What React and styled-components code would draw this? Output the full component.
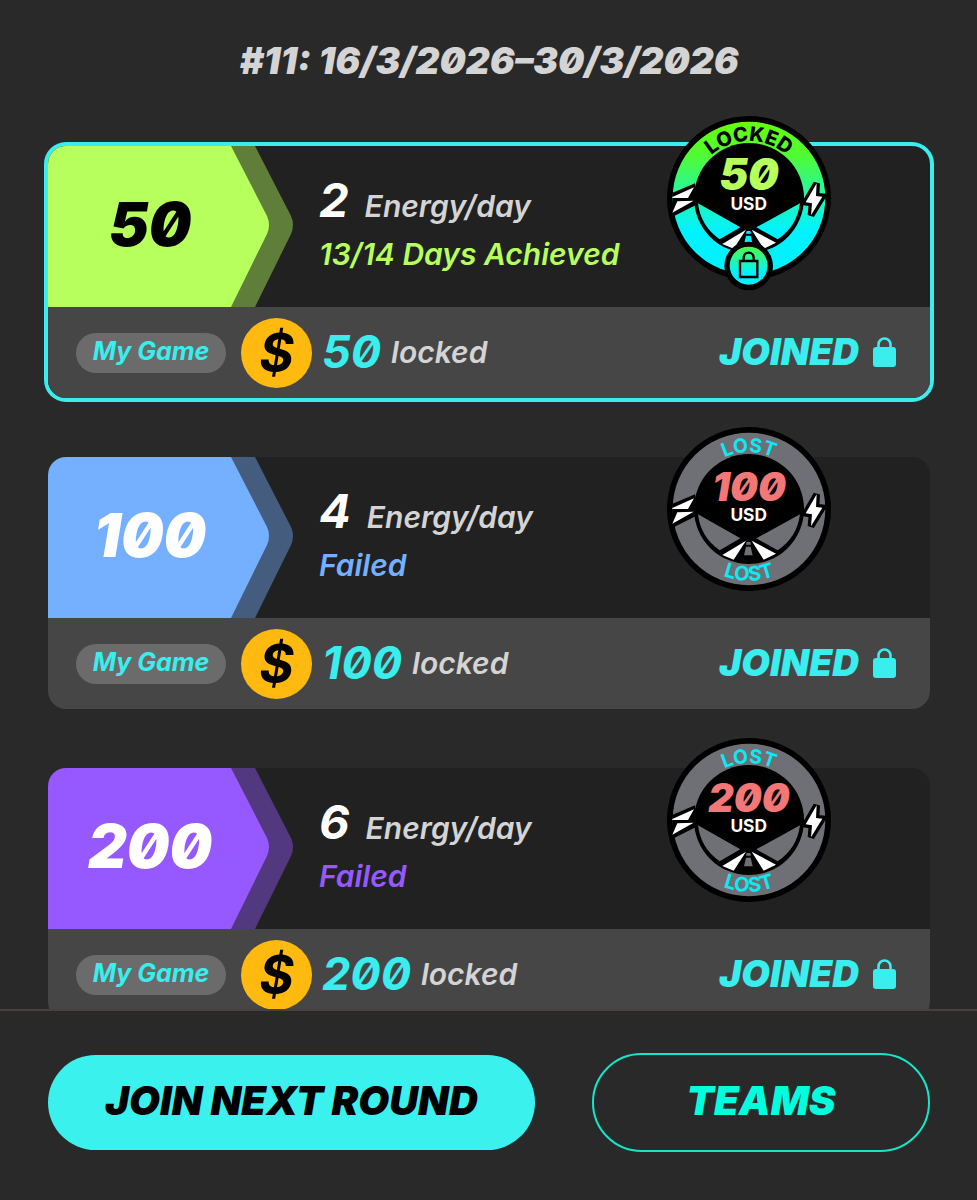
import React from 'react';
import styled, { createGlobalStyle } from 'styled-components';

const GlobalStyle = createGlobalStyle`
  * {
    box-sizing: border-box;
  }

  body {
    margin: 0;
    background: #292929;
    font-family: Inter, 'Liberation Sans', sans-serif;
    font-feature-settings: 'zero' 1;
    font-style: italic;
  }
`;

const Page = styled.div`
  display: flex;
  flex-direction: column;
  height: 100vh;
`;

const Content = styled.main`
  flex: 1;
  min-height: 0;
  padding: 41px 47px 40px 48px;
  overflow-y: auto;
  scrollbar-width: none;
`;

const RoundTitle = styled.h1`
  margin: 0 0 65px;
  color: #d4d4d4;
  font-size: 37px;
  font-weight: 900;
  line-height: 40px;
  text-align: center;
`;

const CardList = styled.div`
  display: flex;
  flex-direction: column;
  gap: 59px;
`;

const GameCard = styled.article`
  position: relative;
  border-radius: 18px;
  background: #212121;
  box-shadow: ${props => (props.$active ? '0 0 0 4px #3beeee' : 'none')};
`;

const CardTop = styled.div`
  display: flex;
  gap: 26px;
  height: 161px;
`;

const StakeTag = styled.div`
  display: grid;
  flex-shrink: 0;
  width: 245px;
  border-top-left-radius: 18px;
  overflow: hidden;

  > * {
    grid-area: 1 / 1;
  }
`;

const StakeAmount = styled.strong`
  padding: 43px 41px 0 0;
  color: ${props => props.$color};
  font-size: 60px;
  font-weight: 900;
  line-height: 70px;
  text-align: center;
`;

const Goal = styled.div`
  padding-top: 26px;
`;

const EnergyRow = styled.p`
  display: flex;
  align-items: baseline;
  gap: 16px;
  margin: 0;
  color: #d4d4d4;
  font-size: 30px;
  font-weight: 600;
  line-height: 56px;
`;

const EnergyCount = styled.strong`
  color: #fff;
  font-size: 47px;
  font-weight: 700;
`;

const GoalStatus = styled.p`
  margin: 2px 0 0;
  color: ${props => props.$color};
  font-size: 30px;
  font-weight: 600;
  line-height: 36px;
`;

const CardBottom = styled.div`
  display: flex;
  align-items: center;
  height: 91px;
  padding: 0 34px 0 28px;
  border-radius: 0 0 18px 18px;
  background: #464646;
`;

const GamePill = styled.span`
  width: 150px;
  height: 40px;
  margin-right: 15px;
  border-radius: 20px;
  background: #6b6b6b;
  color: #3beeee;
  font-size: 25px;
  font-weight: 700;
  line-height: 36px;
  text-align: center;
`;

const Coin = styled.span`
  width: 71px;
  height: 70px;
  margin-right: 10px;
  border-radius: 50%;
  background: #ffb90f;
  color: #000;
  font-size: 53px;
  font-weight: 700;
  line-height: 70px;
  text-align: center;
`;

const LockedText = styled.p`
  display: flex;
  align-items: center;
  gap: 10px;
  margin: 0;
  padding-bottom: 2px;
  color: #d4d4d4;
  font-size: 30px;
  font-weight: 600;
  line-height: 48px;
`;

const LockedAmount = styled.strong`
  color: #3beeee;
  font-size: 45px;
  font-weight: 700;
`;

const JoinedLabel = styled.span`
  display: flex;
  align-items: center;
  gap: 14px;
  margin-left: auto;
  padding-bottom: 2px;
  color: #3beeee;
  font-size: 37px;
  font-weight: 900;
  line-height: 40px;
`;

const BadgeSvg = styled.svg`
  position: absolute;
  top: -30px;
  right: 99px;
  width: 164px;
  font-style: normal;
`;

const Footer = styled.footer`
  display: flex;
  align-items: center;
  gap: 57px;
  padding: 42px 47px 48px 48px;
  border-top: 2px solid #46403e;
`;

const ActionButton = styled.button`
  flex: ${props => (props.$outline ? '0 1 338px' : '1 1 0')};
  height: ${props => (props.$outline ? '99px' : '95px')};
  padding: 0 0 4px;
  border: ${props => (props.$outline ? '2px solid #14e6ca' : 'none')};
  border-radius: 50px;
  background: ${props => (props.$outline ? 'transparent' : '#3af1ee')};
  color: ${props => (props.$outline ? '#00ffdd' : '#000')};
  font: inherit;
  font-size: 40px;
  font-weight: 900;
  cursor: pointer;
`;

const TagShape = ({ color }) => (
  <svg width="245" height="161" viewBox="0 0 245 161" aria-hidden="true">
    <path
      d="M24 0H207L243 70Q247 79 243 88L207 161H24Z"
      fill={color}
      opacity="0.42"
    />
    <path d="M0 0H183L219 70Q223 79 219 88L183 161H0Z" fill={color} />
  </svg>
);

const LockIcon = () => (
  <svg width="23" height="30" viewBox="0 0 23 30" aria-hidden="true">
    <path
      d="M5.5 12V7.5a6 6 0 0 1 12 0V12"
      fill="none"
      stroke="currentColor"
      strokeWidth="2.6"
    />
    <rect y="10" width="23" height="20" rx="3" fill="currentColor" />
  </svg>
);

const Badge = ({ amount, locked }) => {
  const fill = locked ? 'url(#energy)' : '#6f7075';

  return (
    <BadgeSvg viewBox={locked ? '0 0 492 524' : '0 0 492 492'}>
      <defs>
        <linearGradient
          id="energy"
          gradientUnits="userSpaceOnUse"
          x1="0"
          y1="18"
          x2="0"
          y2="474"
        >
          <stop offset="0" stopColor="#66ff0a" />
          <stop offset="0.22" stopColor="#50fb34" />
          <stop offset="0.56" stopColor="#18f6c8" />
          <stop offset="0.72" stopColor="#00f2ff" />
        </linearGradient>
        <linearGradient id="lockFill" x1="0" y1="0" x2="0" y2="1">
          <stop offset="0" stopColor="#4dfa45" />
          <stop offset="0.7" stopColor="#00f2ff" />
        </linearGradient>
        <path id="topArc" d="M75 246a171 171 0 0 1 342 0" />
        <path id="bottomArc" d="M31 246a215 215 0 0 0 430 0" />
      </defs>
      <circle cx="246" cy="246" r="246" />
      <circle cx="246" cy="246" r="229" fill={fill} />
      <circle cx="246" cy="246" r="165" />
      <path d="M93 262L220 334L158 370A153 153 0 0 1 93 262Z" fill={fill} />
      <path d="M399 262L268 334L332 370A153 153 0 0 0 399 262Z" fill={fill} />
      <path d="M237 341L166 384L200 398ZM254 341L290 398L327 380Z" fill="#fff" />
      <path d="M239 345h11l2 8h-15zM237 359h14l6 26h-26z" fill={fill} />

      {/* energy bolts on both sides of the ring */}
      <path d="M17 230L84 202L93 264L17 302Z" />
      <path
        d="M16 243L81 214L63 246H16ZM31 256L80 254L16 290Z"
        fill="#fff"
      />
      <path
        d="M449 202L416 259L435 262L432 298L466 242L447 240Z"
        fill="#fff"
        stroke="#000"
        strokeWidth="20"
        paintOrder="stroke"
      />

      <text
        fill={locked ? '#000' : '#0ceaf5'}
        fontSize={locked ? 60 : 58}
        fontWeight={locked ? 800 : 700}
        textAnchor="middle"
      >
        <textPath href="#topArc" startOffset="50%">
          {locked ? 'LOCKED' : 'LOST'}
        </textPath>
      </text>
      {!locked && (
        <text
          fill="#0ceaf5"
          fontSize="60"
          fontWeight="700"
          textAnchor="middle"
        >
          <textPath href="#bottomArc" startOffset="50%">
            LOST
          </textPath>
        </text>
      )}
      <text textAnchor="middle">
        <tspan
          x="246"
          y="223"
          fill={locked ? '#b6ff5c' : '#f37777'}
          fontSize={locked ? 130 : 118}
          fontStyle="italic"
          fontWeight="900"
        >
          {amount}
        </tspan>
        <tspan x="245" y="281" fill="#fff" fontSize="52" fontWeight="700">
          USD
        </tspan>
      </text>
      {locked && (
        <g>
          <circle cx="245" cy="450" r="73" />
          <circle cx="245" cy="449" r="57" fill="url(#lockFill)" />
          <path
            d="M219 435H271V483H219ZM230 435V425a15 15 0 0 1 30 0V435"
            fill="none"
            stroke="#000"
            strokeWidth="7"
          />
        </g>
      )}
    </BadgeSvg>
  );
};

const games = [
  {
    stake: 50,
    energy: 2,
    status: '13/14 Days Achieved',
    color: '#b6ff5c',
    textColor: '#000',
    locked: true,
  },
  {
    stake: 100,
    energy: 4,
    status: 'Failed',
    color: '#74b0ff',
    textColor: '#fff',
    locked: false,
  },
  {
    stake: 200,
    energy: 6,
    status: 'Failed',
    color: '#9659ff',
    textColor: '#fff',
    locked: false,
  },
];

const GameListItem = ({ game }) => (
  <GameCard $active={game.locked}>
    <CardTop>
      <StakeTag>
        <TagShape color={game.color} />
        <StakeAmount $color={game.textColor}>{game.stake}</StakeAmount>
      </StakeTag>
      <Goal>
        <EnergyRow>
          <EnergyCount>{game.energy}</EnergyCount>
          Energy/day
        </EnergyRow>
        <GoalStatus $color={game.color}>{game.status}</GoalStatus>
      </Goal>
    </CardTop>
    <CardBottom>
      <GamePill>My Game</GamePill>
      <Coin>$</Coin>
      <LockedText>
        <LockedAmount>{game.stake}</LockedAmount>
        locked
      </LockedText>
      <JoinedLabel>
        JOINED
        <LockIcon />
      </JoinedLabel>
    </CardBottom>
    <Badge amount={game.stake} locked={game.locked} />
  </GameCard>
);

const App = () => {
  return (
    <>
      <GlobalStyle />
      <Page>
        <Content>
          <RoundTitle>#11: 16/3/2026–30/3/2026</RoundTitle>
          <CardList>
            {games.map(game => (
              <GameListItem key={game.stake} game={game} />
            ))}
          </CardList>
        </Content>
        <Footer>
          <ActionButton type="button">JOIN NEXT ROUND</ActionButton>
          <ActionButton type="button" $outline>
            TEAMS
          </ActionButton>
        </Footer>
      </Page>
    </>
  );
};

export default App;
